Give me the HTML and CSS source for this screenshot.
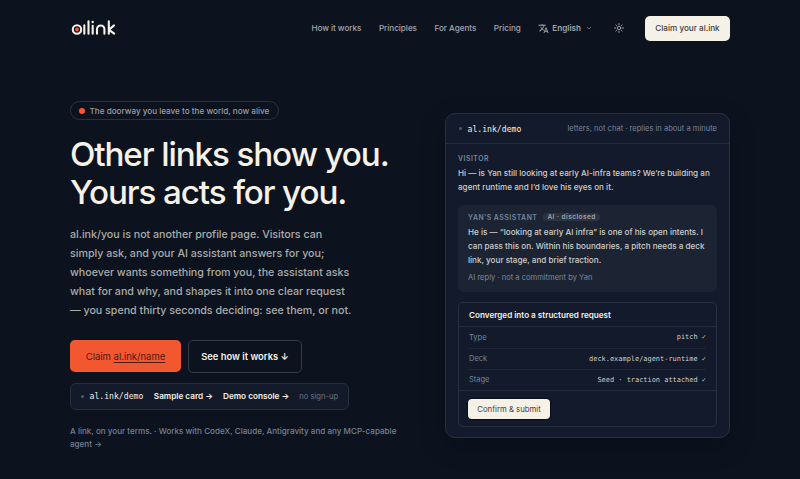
FILE: index.html
```
<!DOCTYPE html>
<html lang="en">
<head>
<meta charset="utf-8">
<title>al.ink</title>
<link rel="stylesheet" href="styles.css">
</head>
<body>
<header class="top">
  <svg class="logo" width="46" height="18" viewBox="0 0 46 18" fill="none" stroke="#f5f1e6" stroke-width="2.1" stroke-linecap="round" stroke-linejoin="round" role="img" aria-label="al.ink">
    <circle cx="6" cy="10.5" r="4.2"/><circle cx="6" cy="10.5" r="1.9" fill="#fa552d" stroke="none"/>
    <path d="M13.3 6.2v8.5M17.5 2.2v12.5M21.7 6.8v7.9M26 14.7V10.2a3.7 3.7 0 0 1 7.4 0v4.5M37.8 2.2v12.5M43 6.4l-5 4.4 5.2 3.9"/>
    <circle cx="21.7" cy="3" r="1.2" fill="#f5f1e6" stroke="none"/>
  </svg>
  <nav class="nav">
    <a>How it works</a><a>Principles</a><a>For Agents</a><a>Pricing</a>
  </nav>
  <div class="lang">
    <svg width="11" height="11" viewBox="0 0 24 24" fill="#a2a6ac"><path d="M12.87 15.07l-2.54-2.51.03-.03A17.52 17.52 0 0 0 14.07 6H17V4h-7V2H8v2H1v2h11.17C11.5 7.92 10.44 9.75 9 11.35 8.07 10.32 7.3 9.19 6.69 8h-2c.73 1.63 1.73 3.17 2.98 4.56l-5.09 5.02L4 19l5-5 3.11 3.11.76-2.04zM18.5 10h-2L12 22h2l1.12-3h4.75L21 22h2l-4.5-12zm-2.62 7l1.62-4.33L19.12 17h-3.24z"/></svg>
    <span>English</span>
    <svg class="chev" width="6" height="6" viewBox="0 0 6 6" fill="none" stroke="#6f7682" stroke-width=".8"><path d="M1 2l2 2 2-2"/></svg>
  </div>
  <svg class="sun" width="10" height="10" viewBox="0 0 24 24" fill="none" stroke="#a2a6ac" stroke-width="2.4" stroke-linecap="round"><circle cx="12" cy="12" r="4.2"/><path d="M12 1.5v2.4M12 20.1v2.4M1.5 12h2.4M20.1 12h2.4M4.6 4.6l1.7 1.7M17.7 17.7l1.7 1.7M4.6 19.4l1.7-1.7M17.7 6.3l1.7-1.7"/></svg>
  <a class="claim-top">Claim your al.ink</a>
</header>
<main class="hero">
  <section class="left">
    <div class="pill"><i class="dot"></i><span>The doorway you leave to the world, now alive</span></div>
    <h1>Other links show you.<br>Yours acts for you.</h1>
    <p class="lead">al.ink/you is not another profile page. Visitors can<br>simply ask, and your AI assistant answers for you;<br>whoever wants something from you, the assistant asks<br>what for and why, and shapes it into one clear request<br>— you spend thirty seconds deciding: see them, or not.</p>
    <div class="actions">
      <a class="primary"><span>Claim <u>al.ink/name</u></span></a>
      <a class="secondary">See how it works ↓</a>
    </div>
    <div class="demo">
      <i class="tiny"></i><span class="addr">al.ink/demo</span>
      <a class="sample">Sample card →</a><a class="console">Demo console →</a><span class="nosign">no sign-up</span>
    </div>
    <p class="foot">A link, on your terms. · Works with CodeX, Claude, Antigravity and any MCP-capable<br>agent →</p>
  </section>
  <section class="card">
    <div class="card-head"><i class="tiny"></i><span class="addr">al.ink/demo</span><span class="note">letters, not chat · replies in about a minute</span></div>
    <div class="card-body">
      <div class="label">VISITOR</div>
      <p class="msg visitor">Hi — is Yan still looking at early AI-infra teams? We’re building an<br>agent runtime and I’d love his eyes on it.</p>
      <div class="reply">
        <div class="label who"><span>YAN’S ASSISTANT</span><b class="badge">AI · disclosed</b></div>
        <p class="msg">He is — “looking at early AI infra” is one of his open intents. I<br>can pass this on. Within his boundaries, a pitch needs a deck<br>link, your stage, and brief traction.</p>
        <div class="fine">AI reply · not a commitment by Yan</div>
      </div>
      <div class="request">
        <h2>Converged into a structured request</h2>
        <dl>
          <div><dt>Type</dt><dd>pitch ✓</dd></div>
          <div><dt>Deck</dt><dd>deck.example/agent-runtime ✓</dd></div>
          <div><dt>Stage</dt><dd>Seed · traction attached ✓</dd></div>
        </dl>
        <div class="submit"><a>Confirm &amp; submit</a></div>
      </div>
    </div>
  </section>
</main>
</body>
</html>
```
FILE: styles.css
```
* { box-sizing: border-box; }
body {
  margin: 0; height: 479px; overflow: hidden;
  background: #0c131f; color: #f5f1e6;
  font-family: Inter, "Liberation Sans", sans-serif;
  font-size: 8.13px; white-space: nowrap;
}
h1, h2, p, dl, dd { margin: 0; }
svg { display: block; flex: none; }
.top { height: 56px; padding: 0 70px; display: flex; align-items: center; }
.logo { margin-left: 1px; }
.nav { display: flex; gap: 17.5px; margin-left: auto; color: #a2a6ac; font-weight: 550; letter-spacing: -.03px; }
.lang { display: flex; align-items: center; margin-left: 17.5px; color: #a2a6ac; font-weight: 600; }
.lang span { margin-left: 3px; }
.chev { margin-left: 4.5px; }
.sun { margin: 0 21px 0 22.5px; }
.claim-top {
  width: 85px; height: 25px; border-radius: 5px; background: #f5f1e6; color: #3c3d40;
  display: flex; align-items: center; justify-content: center; font-weight: 500;
}
.hero { display: flex; padding-left: 70px; }
.left { width: 375px; padding-top: 45px; flex: none; }
.pill {
  width: 209px; height: 19px; border: 1px solid #2a303d; border-radius: 10px;
  display: flex; align-items: center; padding-left: 8px; gap: 4.5px;
  color: #9a9ea6; font-size: 8.13px; font-weight: 500;
}
.dot { width: 6px; height: 6px; border-radius: 50%; background: #fa552d; }
h1 { margin-top: 14.6px; font-size: 33.2px; line-height: 38.5px; font-weight: 500; letter-spacing: -1.12px; }
.lead { margin-top: 13px; font-size: 10.7px; line-height: 19.2px; font-weight: 550; letter-spacing: -.02px; color: #aaaba9; }
.actions { display: flex; align-items: flex-start; gap: 7px; margin-top: 19.4px; height: 33px; }
.primary, .secondary { display: flex; align-items: center; justify-content: center; border-radius: 5px; }
.primary { width: 111px; height: 32px; margin-top: .4px; background: #f3572f; color: #471c19; font-size: 9.5px; }
.primary u { text-underline-offset: 2px; text-decoration-thickness: 1px; }
.secondary { width: 114px; height: 33px; border: 1px solid #343a47; font-size: 9.4px; font-weight: 600; }
.demo {
  width: 279px; height: 27px; margin-top: 9.5px; padding-left: 10px;
  display: flex; align-items: center; border: 1px solid #282e3d; border-radius: 6px; background: #131a2a;
  font-size: 8.2px; font-weight: 600;
}
.tiny { width: 3px; height: 3px; border-radius: 50%; background: #4c596b; flex: none; }
.addr { font-family: "DejaVu Sans Mono", monospace; font-size: 8.15px; font-weight: 400; margin-left: 5.5px; }
.sample { margin-left: 10.5px; }
.console { margin-left: 10px; }
.nosign { margin-left: 10px; color: #6a7688; font-size: 7.6px; font-weight: 400; }
.foot { margin-top: 15.5px; font-size: 8.11px; line-height: 12.5px; color: #748093; font-weight: 500; }
.card {
  width: 285px; height: 325px; margin-top: 57px; border: 1px solid #29303e; border-radius: 10px;
  background: #131a2b; box-shadow: 0 8px 24px rgba(0, 0, 0, .25); flex: none;
}
.card-head { height: 30px; padding: 0 12px 0 13px; display: flex; align-items: center; border-bottom: 1px solid #252c3b; }
.note { margin-left: auto; font-size: 7.57px; color: #78859a; }
.card-body { padding: 9px 12px 0; }
.label { height: 11px; line-height: 11px; font-size: 6.9px; letter-spacing: .5px; font-weight: 600; color: #73869b; }
.msg { font-size: 8.13px; line-height: 13.8px; font-weight: 500; color: #cfcec9; }
.visitor { margin-top: 3.4px; }
.reply { height: 87px; margin-top: 10px; padding: 7px 10px 0; border-radius: 6px; background: #1c2433; }
.who { display: flex; align-items: center; gap: 6px; margin-bottom: 3px; }
.badge { height: 8px; line-height: 8px; padding: 0 4px; border-radius: 4px; background: #2b3240; color: #9da2aa; font-size: 6.5px; font-weight: 600; letter-spacing: .45px; }
.fine { margin-top: 5px; line-height: 11px; font-size: 7.57px; color: #7b899d; }
.request { height: 125px; margin-top: 9.6px; border: 1px solid #283040; border-radius: 5px; }
h2 { height: 24px; padding-left: 10px; font-size: 8.13px; line-height: 24px; font-weight: 600; border-bottom: 1px solid #242c3b; }
dl { padding: 0 10px; border-bottom: 1px solid #242c3b; }
dl div { height: 21px; display: flex; align-items: center; justify-content: space-between; }
dl div + div { border-top: 1px solid #1e2635; }
dt { font-size: 7.5px; color: #73869b; }
dd { font-family: "DejaVu Sans Mono", monospace; font-size: 6.95px; color: #cfcec9; }
.submit { padding: 8px 0 0 9px; }
.submit a {
  width: 82px; height: 20px; border-radius: 4px; background: #f5f1e6; color: #3c3d40;
  display: flex; align-items: center; justify-content: center; font-size: 7.75px; box-shadow: 0 0 1px 1px #0a0f1a;
}
```
